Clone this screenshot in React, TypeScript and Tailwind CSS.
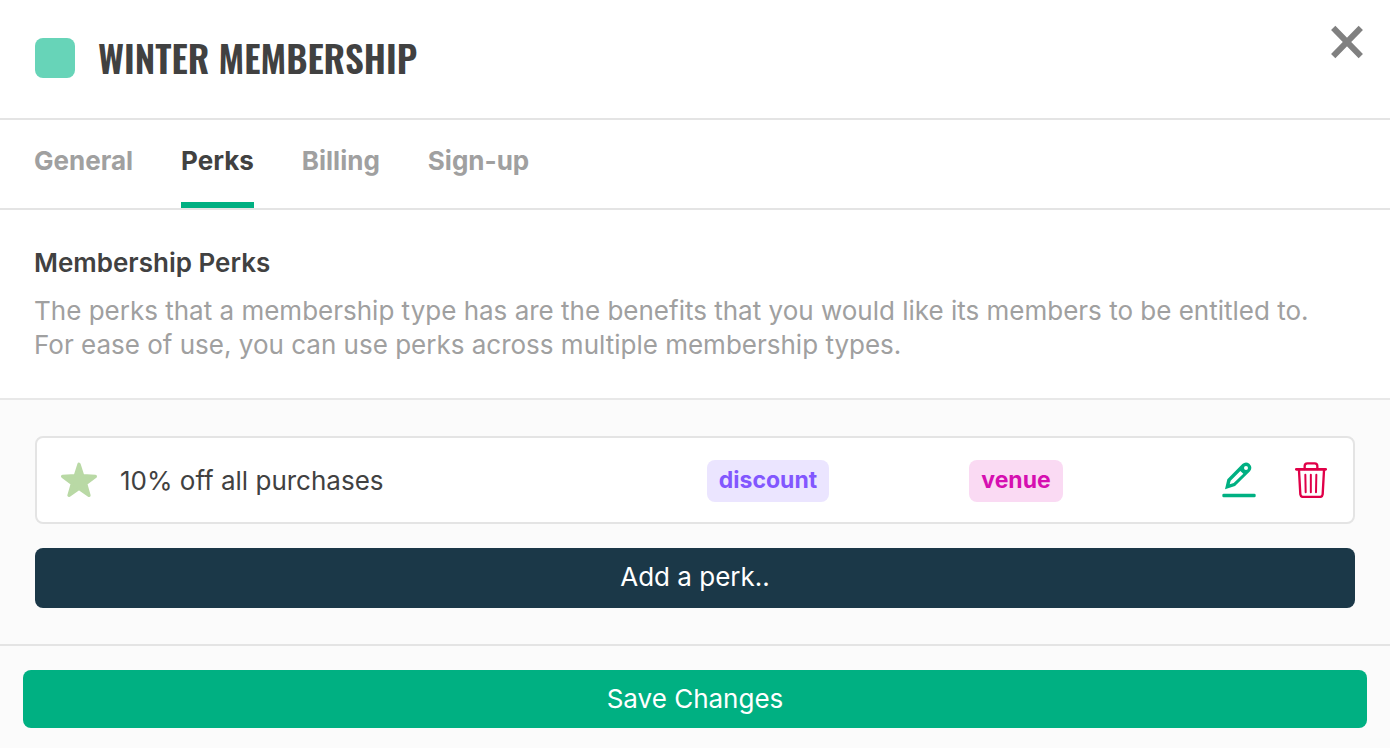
import React, { useState } from "react";

interface Perk {
  id: string;
  name: string;
  type: string;
  scope: string;
}

const TABS = ["General", "Perks", "Billing", "Sign-up"];

const PERKS: Perk[] = [
  { id: "perk-1", name: "10% off all purchases", type: "discount", scope: "venue" },
];

function CloseIcon() {
  return (
    <svg viewBox="0 0 34 34" className="w-[34px] h-[34px]" fill="none" stroke="#808080" strokeWidth="6" aria-hidden="true">
      <path d="M3.2 2.9 30.8 31.1M30.8 2.9 3.2 31.1" />
    </svg>
  );
}

function StarIcon() {
  return (
    <svg viewBox="120 96 114 108" className="w-[38px] h-9 shrink-0" fill="#b9d9a5" stroke="#b9d9a5" strokeWidth="10" strokeLinejoin="round" aria-hidden="true">
      <path d="M177 103 188 137 226 139 197 161 207 196 177 175 147 196 157 161 128 139 166 137Z" />
    </svg>
  );
}

function EditIcon() {
  return (
    <svg viewBox="96 96 102 108" className="w-[34px] h-9" fill="#00b082" aria-hidden="true">
      <path
        fillRule="evenodd"
        d="M105 178 112 148 157 102Q167 93 178 101 189 112 180 124L135 168ZM119 163 131 159 160 131 151 123 122 152ZM168 108a6 6 0 1 0 0 12 6 6 0 1 0 0-12Z"
      />
      <rect x="97" y="191" width="100" height="11" rx="4" />
    </svg>
  );
}

function TrashIcon() {
  return (
    <svg viewBox="315 96 96 108" className="w-8 h-9" fill="none" stroke="#e00048" strokeWidth="7" strokeLinecap="round" strokeLinejoin="round" aria-hidden="true">
      <path d="M319 118H407" strokeWidth="8" />
      <path d="M344 117V108Q344 100 352 100H374Q382 100 382 108V117" />
      <path d="M327 121 331 193Q332 201 340 201H389Q397 201 398 193L402 121" />
      <path d="M346 134 347 187M362.500 134V187M379 134 378 187" strokeWidth="6" />
    </svg>
  );
}

export default function App() {
  const [activeTab, setActiveTab] = useState("Perks");

  return (
    <div className="min-h-screen flex flex-col bg-white text-[#414141] text-[26px] leading-[34px] font-['Inter',sans-serif] antialiased">
      {/* Header */}
      <header className="flex items-start justify-between border-b-2 border-[#e4e4e4] pl-[35px] pr-[26px] pt-[25px] pb-[27px]">
        <div className="flex items-center gap-[23px] h-[66px]">
          <span className="w-10 h-10 rounded-lg bg-[#67d4b8]" />
          <h1 className="text-[37px] leading-[66px] font-semibold uppercase font-['Oswald',sans-serif]">
            Winter Membership
          </h1>
        </div>
        <button type="button" aria-label="Close">
          <CloseIcon />
        </button>
      </header>

      {/* Tabs */}
      <nav className="flex gap-12 border-b-2 border-[#e4e4e4] px-[34px]">
        {TABS.map((tab) => (
          <button
            key={tab}
            type="button"
            onClick={() => setActiveTab(tab)}
            className={`pt-6 pb-6 border-b-[6px] font-bold ${
              activeTab === tab ? "border-[#00b082] text-[#414141]" : "border-transparent text-[#a0a0a0]"
            }`}
          >
            {tab}
          </button>
        ))}
      </nav>

      {/* Intro */}
      <section className="border-b-2 border-[#e8e8e8] px-[34px] py-9">
        <h2 className="font-semibold mb-[14px]">Membership Perks</h2>
        <p className="text-[#a0a0a0]">
          The perks that a membership type has are the benefits that you would like its members to be entitled to.
          <br />
          For ease of use, you can use perks across multiple membership types.
        </p>
      </section>

      {/* Perk list */}
      <main className="bg-[#fbfbfb] border-b-2 border-[#e4e4e4] px-[35px] py-9 space-y-6">
        <ul className="space-y-6">
          {PERKS.map((perk) => (
            <li
              key={perk.id}
              className="grid grid-cols-[1fr_248px_248px_213px] items-center bg-white border-2 border-[#e4e4e4] rounded-lg py-5"
            >
              <div className="flex items-center gap-[22px] pl-[23px]">
                <StarIcon />
                <span className="pt-0.5">{perk.name}</span>
              </div>
              <div className="flex justify-center pt-0.5">
                <span className="rounded-lg px-3 pt-[3px] pb-[5px] text-[23px] font-bold bg-[#ebe5ff] text-[#8257ff]">
                  {perk.type}
                </span>
              </div>
              <div className="flex justify-center pt-0.5">
                <span className="rounded-lg px-3 pt-[3px] pb-[5px] text-[23px] font-bold bg-[#fadaf3] text-[#d60fb1]">
                  {perk.scope}
                </span>
              </div>
              <div className="flex justify-end items-center gap-[39px] pr-[26px]">
                <button type="button" aria-label="Edit perk">
                  <EditIcon />
                </button>
                <button type="button" aria-label="Delete perk">
                  <TrashIcon />
                </button>
              </div>
            </li>
          ))}
        </ul>
        <button type="button" className="block w-full rounded-lg bg-[#1b3848] text-white pt-3 pb-[14px]">
          Add a perk..
        </button>
      </main>

      {/* Footer */}
      <footer className="flex-1 bg-[#fbfbfb] px-[23px] pt-6 pb-5">
        <button type="button" className="block w-full rounded-lg bg-[#00b082] text-white py-3">
          Save Changes
        </button>
      </footer>
    </div>
  );
}
